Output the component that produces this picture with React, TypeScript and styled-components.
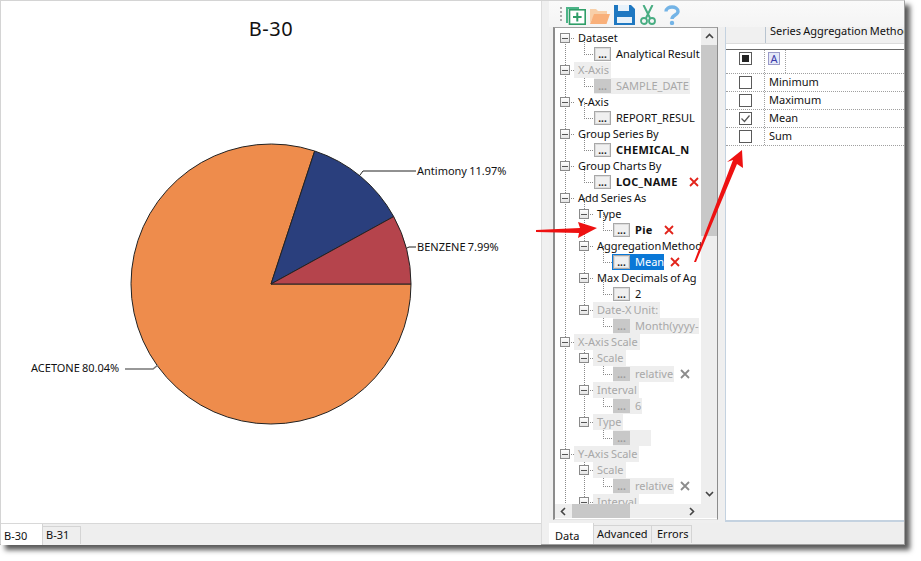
import React from "react";
import styled, { createGlobalStyle } from "styled-components";

const GlobalStyle = createGlobalStyle`
    html, body {
        margin: 0;
        background: #fff;
    }
    body {
        font-family: "Noto Sans", "Liberation Sans", sans-serif;
        font-size: 11px;
        word-spacing: -0.7px;
        color: #111;
    }
`;

const Page = styled.div`
    position: relative;
    width: 921px;
    height: 561px;
    overflow: hidden;
`;

const Window = styled.div`
    display: flex;
    width: 905px;
    height: 545px;
    box-sizing: border-box;
    border: 1px solid #d4d4d4;
    border-bottom-color: #a0a0a0;
    border-right-color: #a0a0a0;
    background: #eeeeee;
    box-shadow: 5px 5px 5px rgba(0, 0, 0, 0.65);
`;

const ChartPane = styled.div`
    width: 540px;
    display: flex;
    flex-direction: column;
`;

const ChartCanvas = styled.div`
    flex: 1;
    background: #fff;
    border-bottom: 1px solid #d8d8d8;
    display: flex;
    flex-direction: column;
    align-items: center;
`;

const ChartTitle = styled.h1`
    margin: 16px 0 0;
    height: 24px;
    font-size: 20px;
    line-height: 24px;
    letter-spacing: 0.5px;
    font-weight: 400;
    color: #111;
`;

const PieChart = styled.svg`
    display: block;
    width: 540px;
    flex: 1;
`;

const Splitter = styled.div`
    width: 8px;
    background: #f0f0f0;
    border-left: 1px solid #dcdcdc;
    box-sizing: border-box;
`;

const EditorPane = styled.div`
    flex: 1;
    min-width: 0;
    display: flex;
    flex-direction: column;
`;

const Toolbar = styled.div`
    height: 26px;
    box-sizing: border-box;
    padding: 2px 0 0 11px;
    display: flex;
    align-items: center;
    gap: 4px;
    background: linear-gradient(#fafafa, #f4f4f4);
`;

const Grip = styled.span`
    width: 2px;
    height: 16px;
    background: repeating-linear-gradient(#aaa 0 2px, transparent 2px 4px);
`;

const ToolIcon = styled.svg<{ $gap?: number }>`
    display: block;
    flex: none;
    height: 20px;
    margin-left: ${(p) => p.$gap ?? 0}px;
`;

const EditorBody = styled.div`
    flex: 1;
    min-height: 0;
    display: flex;
    background: #efefef;
    padding-left: 4px;
`;

const TreeFrame = styled.div`
    width: 165px;
    height: 493px;
    box-sizing: border-box;
    border-left: 2px solid #8c8c8c;
    border-top: 1px solid #a0a0a0;
    border-right: 1px solid #8c8c8c;
    border-bottom: 1px solid #e2e2e2;
    padding-bottom: 1px;
    display: grid;
    grid-template-columns: 1fr 16px;
    grid-template-rows: 1fr 14px;
    background: #fff;
`;

const TreeViewport = styled.div`
    position: relative;
    overflow: hidden;
    padding-top: 2px;
`;

const Connectors = styled.svg`
    position: absolute;
    left: 0;
    top: 0;
    width: 147px;
    height: 480px;
`;

const Row = styled.div<{ $left: number }>`
    position: relative;
    height: 16px;
    display: flex;
    align-items: center;
    padding-left: ${(p) => p.$left}px;
    white-space: nowrap;
`;

const Expander = styled.span`
    flex: none;
    box-sizing: border-box;
    width: 10px;
    height: 10px;
    margin-right: 4px;
    border: 1px solid #8a8a8a;
    background: linear-gradient(#fff, #e4e4e4);
    display: flex;
    align-items: center;
    justify-content: center;
    &::after {
        content: "";
        width: 6px;
        height: 1px;
        background: #555;
    }
`;

const GroupLabel = styled.span<{ $off?: boolean; $tight?: boolean }>`
    padding: 0 2px 0 4px;
    line-height: 16px;
    word-spacing: ${(p) => (p.$tight ? -2.5 : -0.7)}px;
    background: ${(p) => (p.$off ? "#eeeeee" : "transparent")};
    color: ${(p) => (p.$off ? "#a8a8a8" : "#111")};
`;

const LeafBox = styled.span<{ $off?: boolean; $selected?: boolean }>`
    display: flex;
    align-items: center;
    height: 16px;
    padding: 0 ${(p) => (p.$selected ? "0 0 1px" : "1px 0 0")};
    margin-left: ${(p) => (p.$selected ? -1 : 0)}px;
    background: ${(p) => (p.$selected ? "#0a78d7" : p.$off ? "#eeeeee" : "transparent")};
    color: ${(p) => (p.$selected ? "#fff" : p.$off ? "#a8a8a8" : "#111")};
`;

const DotButton = styled.span<{ $off?: boolean }>`
    flex: none;
    box-sizing: border-box;
    width: 17px;
    height: 14px;
    margin-right: 5px;
    text-align: center;
    line-height: 12px;
    font-size: 10px;
    font-weight: 700;
    color: ${(p) => (p.$off ? "#9a9a9a" : "#222")};
    background: ${(p) => (p.$off ? "#c8c8c8" : "#f0f0f0")};
    border: 1px solid ${(p) => (p.$off ? "#c8c8c8" : "#a8a8a8")};
    box-shadow: ${(p) => (p.$off ? "none" : "inset 0 0 0 1px #dcdcdc")};
`;

const LeafText = styled.span<{ $bold?: boolean }>`
    margin-bottom: 2px;
    font-weight: ${(p) => (p.$bold ? 700 : 400)};
    letter-spacing: ${(p) => (p.$bold ? 0.3 : 0)}px;
`;

const ClearIcon = styled.svg<{ $wide?: boolean }>`
    flex: none;
    width: 10px;
    height: 10px;
    margin-left: ${(p) => (p.$wide ? 10 : 6)}px;
`;

const VScroll = styled.div`
    grid-row: 1 / 3;
    grid-column: 2;
    background: #eeeeee;
    display: flex;
    flex-direction: column;
    align-items: center;
    padding-top: 5px;
`;

const ScrollThumb = styled.div`
    align-self: stretch;
    height: 191px;
    margin-top: 6px;
    background: #c8c8c8;
`;

const VArrowDown = styled.svg`
    margin-top: 255px;
    display: block;
`;

const HScroll = styled.div`
    background: #eeeeee;
    display: flex;
    align-items: center;
    padding-left: 5px;
`;

const HThumb = styled.div`
    width: 58px;
    height: 14px;
    margin: 0 59px 0 6px;
    background: #c8c8c8;
`;

const Grid = styled.div`
    flex: 1;
    margin-left: 7px;
    height: 495px;
    box-sizing: border-box;
    background: #fff;
    border-left: 1px solid #c4d2e0;
    border-bottom: 2px solid #c4d2e0;
    overflow: hidden;
`;

const HeaderRow = styled.div`
    height: 16px;
    display: flex;
    background: #f0f0f0;
    border-bottom: 1px solid #dcdcdc;
`;

const HeaderCorner = styled.div`
    width: 39px;
    border-right: 1px solid #b8c4d0;
`;

const HeaderCell = styled.div`
    flex: 1;
    padding-left: 4px;
    line-height: 8px;
    white-space: nowrap;
    overflow: hidden;
`;

const GridBody = styled.div`
    margin-top: 5px;
    border-top: 1px solid #6a6a6a;
`;

const GridRow = styled.div<{ $height: number }>`
    height: ${(p) => p.$height}px;
    box-sizing: border-box;
    display: flex;
    border-bottom: 1px dotted #a0a0a0;
`;

const CheckCell = styled.div<{ $top?: boolean }>`
    width: 39px;
    flex: none;
    box-sizing: border-box;
    padding-top: ${(p) => (p.$top ? 2 : 0)}px;
    display: flex;
    align-items: ${(p) => (p.$top ? "flex-start" : "center")};
    justify-content: center;
    border-right: 1px dotted #a0a0a0;
`;

const Checkbox = styled.span<{ $state?: "on" | "some" }>`
    box-sizing: border-box;
    width: 13px;
    height: 13px;
    border: 1px solid #5a5a5a;
    background: #fff;
    display: flex;
    align-items: center;
    justify-content: center;
    &::after {
        content: "";
        display: ${(p) => (p.$state === "some" ? "block" : "none")};
        width: 7px;
        height: 7px;
        background: #222;
    }
`;

const ValueCell = styled.div`
    padding-left: 4px;
    line-height: 15px;
`;

const FilterCell = styled.div`
    width: 17px;
    padding: 2px 0 0 3px;
    border-right: 1px dotted #a0a0a0;
`;

const FilterGlyph = styled.div`
    box-sizing: border-box;
    width: 12px;
    height: 13px;
    font-size: 11px;
    line-height: 11px;
    text-align: center;
    color: #3a3aa8;
    background: #e4e8f8;
    border: 1px solid #9a9ac8;
`;

const TabStrip = styled.div`
    height: 21px;
    flex: none;
    display: flex;
    background: #eeeeee;
`;

const Tab = styled.div<{ $active?: boolean; $width: number; $pad: number; $line?: number }>`
    width: ${(p) => p.$width}px;
    box-sizing: border-box;
    padding-left: ${(p) => p.$pad}px;
    background: ${(p) => (p.$active ? "#fff" : "#eeeeee")};
    border-right: 1px solid #d4d4d4;
    border-top: ${(p) => (p.$active ? "0" : "1px solid #d4d4d4")};
    margin: ${(p) => (p.$active ? "0" : "2px 0 1px")};
    line-height: ${(p) => p.$line ?? 16}px;
`;

const Arrows = styled.svg`
    position: absolute;
    left: 0;
    top: 0;
    width: 921px;
    height: 561px;
    pointer-events: none;
`;

type TreeNode = {
    depth: number;
    label: string;
    leaf?: boolean;
    off?: boolean;
    bold?: boolean;
    tight?: boolean;
    selected?: boolean;
    clear?: "red" | "grey";
};

const nodes: TreeNode[] = [
    { depth: 0, label: "Dataset" },
    { depth: 1, label: "Analytical Result", leaf: true },
    { depth: 0, label: "X-Axis", off: true },
    { depth: 1, label: "SAMPLE_DATE", leaf: true, off: true },
    { depth: 0, label: "Y-Axis" },
    { depth: 1, label: "REPORT_RESUL", leaf: true },
    { depth: 0, label: "Group Series By" },
    { depth: 1, label: "CHEMICAL_N", leaf: true, bold: true },
    { depth: 0, label: "Group Charts By" },
    { depth: 1, label: "LOC_NAME", leaf: true, bold: true, clear: "red" },
    { depth: 0, label: "Add Series As" },
    { depth: 1, label: "Type" },
    { depth: 2, label: "Pie", leaf: true, bold: true, clear: "red" },
    { depth: 1, label: "Aggregation Method", tight: true },
    { depth: 2, label: "Mean", leaf: true, selected: true, clear: "red" },
    { depth: 1, label: "Max Decimals of Ag" },
    { depth: 2, label: "2", leaf: true },
    { depth: 1, label: "Date-X Unit:", off: true },
    { depth: 2, label: "Month(yyyy-", leaf: true, off: true },
    { depth: 0, label: "X-Axis Scale", off: true },
    { depth: 1, label: "Scale", off: true },
    { depth: 2, label: "relative", leaf: true, off: true, clear: "grey" },
    { depth: 1, label: "Interval", off: true },
    { depth: 2, label: "6", leaf: true, off: true },
    { depth: 1, label: "Type", off: true },
    { depth: 2, label: "\u00a0\u00a0\u00a0\u00a0\u00a0\u00a0\u00a0", leaf: true, off: true },
    { depth: 0, label: "Y-Axis Scale", off: true },
    { depth: 1, label: "Scale", off: true },
    { depth: 2, label: "relative", leaf: true, off: true, clear: "grey" },
    { depth: 1, label: "Interval", off: true },
];

// tree coordinates are relative to the viewport, which starts at x=555
const railX = (depth: number) => 10 + depth * 19;

const connectorPath = () => {
    const last: Record<number, number> = {};
    let d = "";
    nodes.forEach((node, i) => {
        const y = 10 + i * 16;
        const x = railX(node.depth);
        if (last[node.depth] !== undefined) {
            d += `M${x + 0.5} ${last[node.depth]}V${y}`;
        }
        d += `M${x} ${y + 0.5}H${x + 10}`;
        last[node.depth] = y;
        last[node.depth + 1] = y;
    });
    d += `M${railX(0) + 0.5} ${10 + 26 * 16}V480`;
    return d;
};

const rowLeft = (node: TreeNode) => (node.leaf ? railX(node.depth) + 10 : railX(node.depth) - 5);

const ClearMark = ({ tone, wide }: { tone: "red" | "grey"; wide?: boolean }) => (
    <ClearIcon $wide={wide} viewBox="0 0 10 10">
        <path
            d="M1 1L9 9M9 1L1 9"
            stroke={tone === "red" ? "#e2231a" : "#8c8c8c"}
            strokeWidth="1.8"
            fill="none"
        />
    </ClearIcon>
);

const Tree = () => (
    <TreeFrame>
        <TreeViewport>
            <Connectors>
                <path d={connectorPath()} stroke="#8a8a8a" strokeDasharray="1 1" fill="none" />
            </Connectors>
            {nodes.map((node, i) => (
                <Row key={i} $left={rowLeft(node)}>
                    {node.leaf ? (
                        <>
                            <LeafBox $off={node.off} $selected={node.selected}>
                                <DotButton $off={node.off}>...</DotButton>
                                <LeafText $bold={node.bold}>{node.label}</LeafText>
                            </LeafBox>
                            {node.clear && <ClearMark tone={node.clear} wide={node.bold} />}
                        </>
                    ) : (
                        <>
                            <Expander />
                            <GroupLabel $off={node.off} $tight={node.tight}>{node.label}</GroupLabel>
                        </>
                    )}
                </Row>
            ))}
        </TreeViewport>
        <VScroll>
            <svg width="9" height="6" viewBox="0 0 9 6">
                <path d="M1 5L4.5 1.5L8 5" stroke="#444" strokeWidth="1.6" fill="none" />
            </svg>
            <ScrollThumb />
            <VArrowDown width="9" height="6" viewBox="0 0 9 6">
                <path d="M1 1L4.5 4.5L8 1" stroke="#444" strokeWidth="1.6" fill="none" />
            </VArrowDown>
        </VScroll>
        <HScroll>
            <svg width="6" height="9" viewBox="0 0 6 9">
                <path d="M5 1L1.5 4.5L5 8" stroke="#444" strokeWidth="1.6" fill="none" />
            </svg>
            <HThumb />
            <svg width="6" height="9" viewBox="0 0 6 9">
                <path d="M1 1L4.5 4.5L1 8" stroke="#444" strokeWidth="1.6" fill="none" />
            </svg>
        </HScroll>
    </TreeFrame>
);

const methods = [
    { name: "Minimum" },
    { name: "Maximum" },
    { name: "Mean", checked: true },
    { name: "Sum" },
];

const MethodGrid = () => (
    <Grid>
        <HeaderRow>
            <HeaderCorner />
            <HeaderCell>Series Aggregation Method</HeaderCell>
        </HeaderRow>
        <GridBody>
            <GridRow $height={24}>
                <CheckCell $top>
                    <Checkbox $state="some" />
                </CheckCell>
                <FilterCell>
                    <FilterGlyph>A</FilterGlyph>
                </FilterCell>
            </GridRow>
            {methods.map((m) => (
                <GridRow key={m.name} $height={18}>
                    <CheckCell>
                        <Checkbox>
                            {m.checked && (
                                <svg width="11" height="11" viewBox="0 0 11 11">
                                    <path d="M1.5 5.5L4.5 8.5L9.5 2.5" stroke="#555" strokeWidth="1.2" fill="none" />
                                </svg>
                            )}
                        </Checkbox>
                    </CheckCell>
                    <ValueCell>{m.name}</ValueCell>
                </GridRow>
            ))}
        </GridBody>
    </Grid>
);

const ToolbarIcons = () => (
    <Toolbar>
        <Grip />
        <ToolIcon width={20} viewBox="0 0 20 20">
            <path d="M0 2H13V4H2V18H0Z" fill="#4cb488" />
            <rect x="3.5" y="4.8" width="15.7" height="14.4" fill="#fff" stroke="#2f9e68" strokeWidth="1.6" />
            <path d="M11.3 7.5V16.5M7 12H15.6" stroke="#2f9e68" strokeWidth="2" />
        </ToolIcon>
        <ToolIcon width={20} viewBox="0 0 20 20">
            <path d="M0 4H6L8 6H17V9H5L0 18Z" fill="#f8cfa8" />
            <path d="M0 19L4 9H20L16.5 19Z" fill="#f9b07a" />
        </ToolIcon>
        <ToolIcon width={21} viewBox="0 0 21 20">
            <path d="M0 0H17L21 4V20H0Z" fill="#1f78c1" />
            <rect x="4" y="0" width="11" height="6" fill="#e8f2fa" />
            <rect x="3" y="12" width="15" height="6" fill="#e8f2fa" />
        </ToolIcon>
        <ToolIcon $gap={1} width={16} viewBox="0 0 16 20">
            <path d="M3.5 0L10 13M12.5 0L6 13" stroke="#48ad82" strokeWidth="2" fill="none" />
            <circle cx="4" cy="16" r="3" fill="none" stroke="#48ad82" strokeWidth="1.8" />
            <circle cx="12" cy="16" r="3" fill="none" stroke="#48ad82" strokeWidth="1.8" />
        </ToolIcon>
        <ToolIcon $gap={4} width={16} viewBox="0 0 16 20">
            <path d="M2 6.5C2 0.5 14 0.5 14 6.5C14 10 8 10 8 14" stroke="#74b4e6" strokeWidth="3.4" fill="none" />
            <circle cx="8" cy="18" r="2.2" fill="#74b4e6" />
        </ToolIcon>
    </Toolbar>
);

export default function App() {
    return (
        <Page>
            <GlobalStyle />
            <Window>
                <ChartPane>
                    <ChartCanvas>
                        <ChartTitle>B-30</ChartTitle>
                        <PieChart viewBox="0 40 540 482">
                            <path d="M270 283L313.7 150A140 140 0 1 0 410 283Z" fill="#ee8c4c" stroke="#222" />
                            <path d="M270 283L392.7 215.6A140 140 0 0 0 313.7 150Z" fill="#2a3f7d" stroke="#222" />
                            <path d="M270 283H410A140 140 0 0 0 392.7 215.6Z" fill="#b5444c" stroke="#222" />
                            <g fill="none" stroke="#222">
                                <path d="M359 174L362 170H415" />
                                <path d="M406 247L408 246H415" />
                            </g>
                            <path d="M124 368H152L157 364" fill="none" stroke="#777" strokeWidth="1.5" />
                            <g fontSize="11" fill="#111">
                                <text x="416" y="174">Antimony 11.97%</text>
                                <text x="416" y="250">BENZENE 7.99%</text>
                                <text x="30" y="371">ACETONE 80.04%</text>
                            </g>
                        </PieChart>
                    </ChartCanvas>
                    <TabStrip>
                        <Tab $active $width={42} $pad={3} $line={24}>B-30</Tab>
                        <Tab $width={38} $pad={3} $line={15}>B-31</Tab>
                    </TabStrip>
                </ChartPane>
                <Splitter />
                <EditorPane>
                    <ToolbarIcons />
                    <EditorBody>
                        <Tree />
                        <MethodGrid />
                    </EditorBody>
                    <TabStrip>
                        <Tab $active $width={45} $pad={6} $line={26}>Data</Tab>
                        <Tab $width={58} $pad={3}>Advanced</Tab>
                        <Tab $width={40} $pad={5}>Errors</Tab>
                    </TabStrip>
                </EditorPane>
            </Window>
            <Arrows viewBox="0 0 921 561">
                <path d="M536 230L580 228L578 222L597 228L578 238L579 233L536 232Z" fill="#ee1111" />
                <path d="M694 262L733 160L727 162L742 150L743 168L737 164L696 262Z" fill="#ee1111" />
            </Arrows>
        </Page>
    );
}
